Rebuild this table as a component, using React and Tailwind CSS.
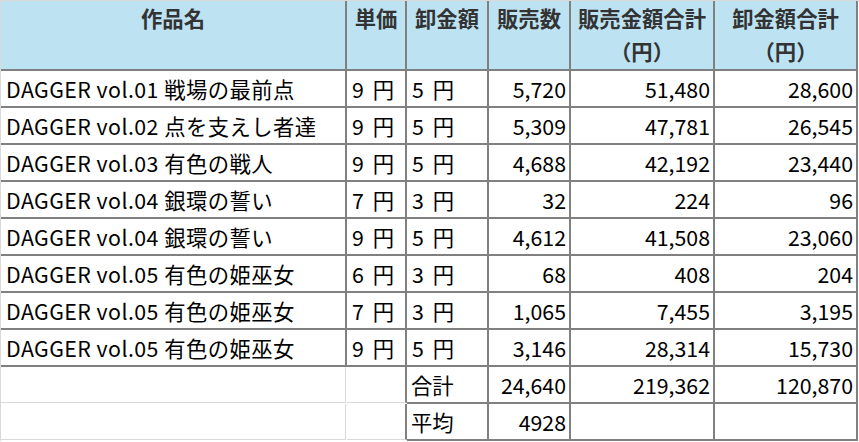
const rows = [
  ['DAGGER vol.01 戦場の最前点', '9', '5', '5,720', '51,480', '28,600'],
  ['DAGGER vol.02 点を支えし者達', '9', '5', '5,309', '47,781', '26,545'],
  ['DAGGER vol.03 有色の戦人', '9', '5', '4,688', '42,192', '23,440'],
  ['DAGGER vol.04 銀環の誓い', '7', '3', '32', '224', '96'],
  ['DAGGER vol.04 銀環の誓い', '9', '5', '4,612', '41,508', '23,060'],
  ['DAGGER vol.05 有色の姫巫女', '6', '3', '68', '408', '204'],
  ['DAGGER vol.05 有色の姫巫女', '7', '3', '1,065', '7,455', '3,195'],
  ['DAGGER vol.05 有色の姫巫女', '9', '5', '3,146', '28,314', '15,730'],
];

const head = 'h-[70px] bg-[#bde3f3] border-r-2 border-b-2 border-[#808080] text-center font-bold text-[#333333] leading-[33px]';
const cell = 'h-[37px] border-r-2 border-b-2 border-[#808080] flex items-center whitespace-nowrap';
const left = cell + ' pl-[5px]';
const right = cell + ' justify-end pr-[3px]';
const blank = 'h-[36px] mb-px border-b border-[#d9d9d9] bg-white';

export default function App() {
  return (
    <div
      className="w-[859px] h-[442px] bg-white overflow-hidden text-[21.33px] text-black"
      style={{ fontFamily: '"Noto Sans CJK JP", "Noto Sans", sans-serif' }}
    >
      <div className="w-[858px] border-l border-t border-r border-[#d9d9d9] box-content">
        <div className="grid grid-cols-[346px_60px_82px_82px_144px_143px]">
          <div className={head}>作品名</div>
          <div className={head}>単価</div>
          <div className={head}>卸金額</div>
          <div className={head}>販売数</div>
          <div className={head}>
            販売金額合計
            <br />
            （円）
          </div>
          <div className={head}>
            卸金額合計
            <br />
            （円）
          </div>

          {rows.map((r, i) => (
            <div key={i} className="contents">
              <div className={left + ' tracking-[0.45px]'}>{r[0]}</div>
              <div className={left}>
                {r[1]}
                <span className="ml-[9px]">円</span>
              </div>
              <div className={left}>
                {r[2]}
                <span className="ml-[9px]">円</span>
              </div>
              <div className={right}>{r[3]}</div>
              <div className={right}>{r[4]}</div>
              <div className={right}>{r[5]}</div>
            </div>
          ))}

          <div className={blank + ' mr-px border-r'}></div>
          <div className={blank + ' border-r-2 border-r-[#808080]'}></div>
          <div className={cell + ' pl-[4px]'}>合計</div>
          <div className={right}>24,640</div>
          <div className={right}>219,362</div>
          <div className={right}>120,870</div>

          <div className={blank + ' mr-px border-r'}></div>
          <div className={blank + ' border-r-2 border-r-[#808080]'}></div>
          <div className={cell + ' pl-[4px]'}>平均</div>
          <div className={right}>4928</div>
          <div className={cell}></div>
          <div className={cell}></div>
        </div>
      </div>
    </div>
  );
}
